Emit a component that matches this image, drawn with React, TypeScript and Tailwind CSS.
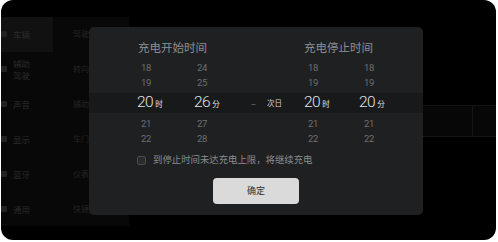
import React from "react";

const CJK = { fontFamily: '"Noto Sans CJK SC", "Noto Sans", sans-serif' };
const NUM = { fontFamily: 'Roboto, "Noto Sans CJK SC", sans-serif' };

const side = ["车辆", "辅助\n驾驶", "声音", "显示", "蓝牙", "通用"];
const second = ["驾驶模式", "转向模式", "辅助功能", "车门车窗", "仪表显示", "快捷方式"];

function SmallRow({ a, b, e, f }: { a: string; b: string; e: string; f: string }) {
  return (
    <div className="flex h-[15px] items-center pl-[48px] text-[9.5px] leading-none tracking-[-0.3px] text-[#6d6e70]" style={NUM}>
      <div className="w-[57px] pl-[4px]">{a}</div>
      <div className="w-[57px] pl-[3px]">{b}</div>
      <div className="w-[16px]" />
      <div className="w-[37px]" />
      <div className="w-[55px] pl-[4px]">{e}</div>
      <div className="pl-[5px]">{f}</div>
    </div>
  );
}

function Big({ n, u }: { n: string; u: string }) {
  return (
    <div className="flex items-baseline text-[#e4e4e4]">
      <span className="text-[15.5px] font-light leading-none tracking-[-0.5px]" style={NUM}>{n}</span>
      <span className="ml-[2px] text-[7.5px] leading-none" style={CJK}>{u}</span>
    </div>
  );
}

export default function App() {
  return (
    <div className="h-[242px] w-[498px] bg-white" style={CJK}>
      <div className="relative ml-[1px] h-[240px] w-[495px] overflow-hidden rounded-[12px] bg-black">
        {/* background settings page */}
        <div className="h-[17px]" />
        <div className="flex h-[209px]">
          <div className="flex w-[128px] bg-[#080808]">
            <div className="flex w-[52px] flex-col">
              {side.map((s, i) => (
                <div
                  key={i}
                  className={`flex h-[35px] items-center gap-[6px] ${i === 0 ? "bg-[#111111]" : ""}`}
                >
                  <div className="h-[6px] w-[6px] rounded-[1px] bg-[#222222]" />
                  <div className="whitespace-pre text-[8.5px] leading-[12px] text-[#2a2a2a]">{s}</div>
                </div>
              ))}
            </div>
            <div className="flex flex-1 flex-col pl-[20px]">
              {second.map((s, i) => (
                <div key={i} className="flex h-[35px] items-center text-[8px] text-[#242424]">
                  {s}
                </div>
              ))}
            </div>
          </div>
          <div className="flex flex-1 flex-col">
            <div className="mt-[88px] flex h-[32px] border-y border-[#141414] bg-[#070707]">
              <div className="flex-1" />
              <div className="w-[24px] border-l border-[#151515]" />
            </div>
          </div>
        </div>

        {/* dialog */}
        <div className="absolute left-[88px] top-[27px] flex h-[188px] w-[334px] flex-col rounded-[5px] bg-[#1f2022] pt-[12px]">
          <div className="flex h-[16px] items-center text-[11.5px] leading-[16px] text-[#8d8e90]">
            <div className="w-[215px] pl-[49px]">充电开始时间</div>
            <div>充电停止时间</div>
          </div>
          <div className="mt-[5px]">
            <SmallRow a="18" b="24" e="18" f="18" />
            <SmallRow a="19" b="25" e="19" f="19" />
          </div>
          <div className="mt-[3px] flex h-[20px] items-center bg-[#18191b] pl-[48px]">
            <div className="w-[57px]"><Big n="20" u="时" /></div>
            <div className="w-[57px]"><Big n="26" u="分" /></div>
            <div className="w-[16px] text-[9px] leading-none text-[#77787a]">–</div>
            <div className="w-[37px] text-[7.5px] leading-none text-[#d4d4d4]">次日</div>
            <div className="w-[55px]"><Big n="20" u="时" /></div>
            <div><Big n="20" u="分" /></div>
          </div>
          <div className="mt-[3px]">
            <SmallRow a="21" b="27" e="21" f="21" />
            <SmallRow a="22" b="28" e="22" f="22" />
          </div>
          <div className="mt-[8px] flex h-[12px] items-center pl-[48px]">
            <div className="h-[9px] w-[9px] rounded-[2px] border border-[#4a4b4d] bg-[#2a2b2d]" />
            <div className="ml-[7px] text-[9.4px] leading-none text-[#8a8b8d]">到停止时间未达充电上限，将继续充电</div>
          </div>
          <div className="mt-[12px] flex justify-center">
            <div className="flex h-[26px] w-[86px] items-center justify-center rounded-[4px] bg-[#dadada] text-[9px] text-[#2e2e2e]">
              确定
            </div>
          </div>
        </div>
      </div>
    </div>
  );
}
